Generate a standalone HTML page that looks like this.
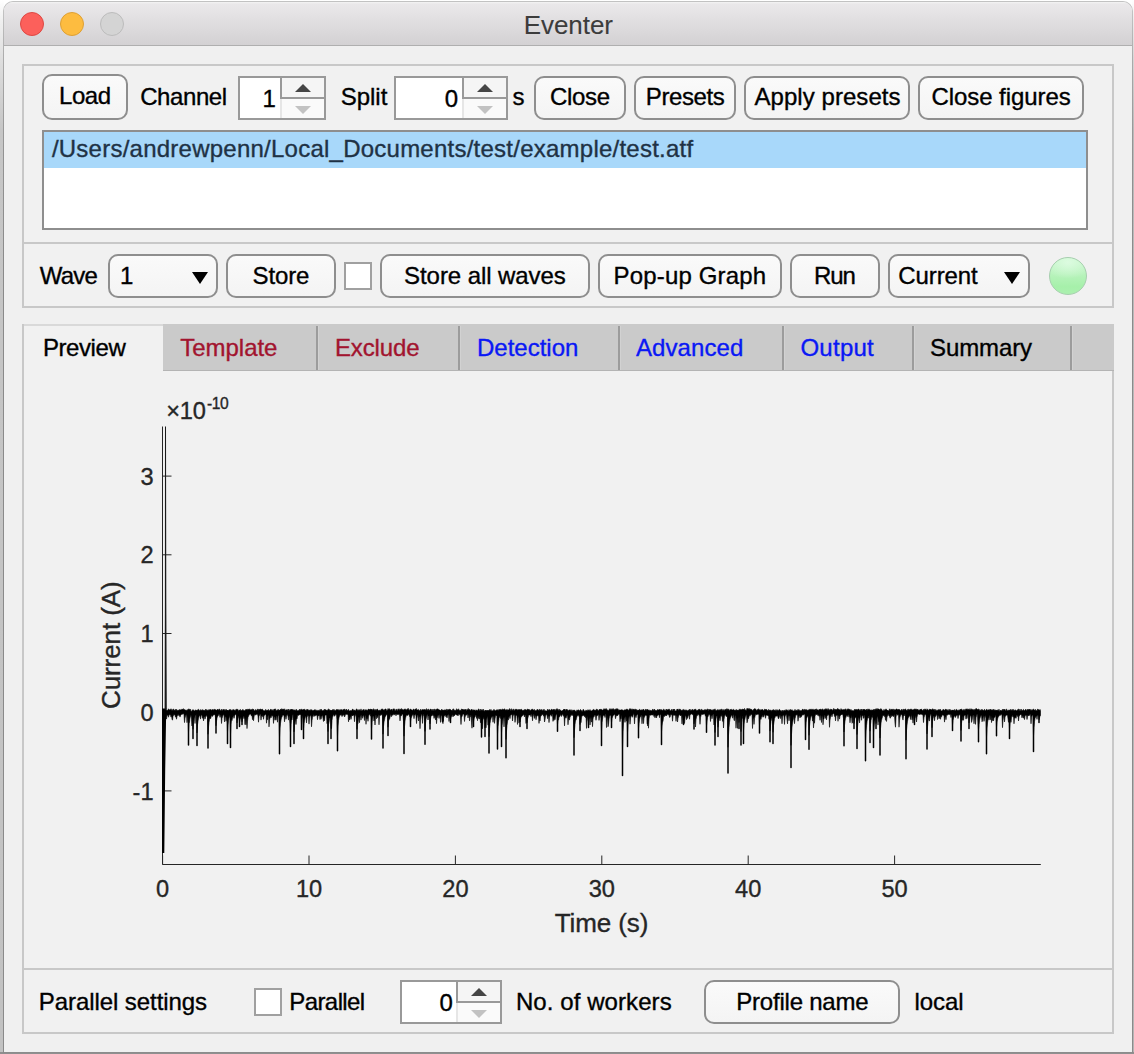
<!DOCTYPE html>
<html><head><meta charset="utf-8"><title>Eventer</title>
<style>
html,body{margin:0;padding:0;}
body{width:1134px;height:1054px;overflow:hidden;background:#fff;position:relative;font-family:"Liberation Sans",sans-serif;}
.abs{position:absolute;box-sizing:border-box;}
.t{position:absolute;white-space:pre;-webkit-text-stroke:0.35px currentColor;}
.shadowL{left:0;top:0;width:4px;height:1054px;background:linear-gradient(to bottom,#ffffff 0px,#f0f0f0 20px,#dedede 60px,#c6c6c6 130px,#c2c2c2 100%);}
.shadowR{left:1132px;top:0;width:2px;height:1054px;background:linear-gradient(to bottom,#ffffff 0px,#ededed 20px,#d6d6d6 60px,#bababa 130px,#b4b4b4 100%);}
.shadowB{left:0;top:1052px;width:1134px;height:2px;background:#8f8f8f;}
.win{left:3px;top:1px;width:1130px;height:1052px;background:#f0f0f0;border:1px solid #c2c2c2;border-bottom-color:#8c8c8c;border-radius:10px 10px 0 0;overflow:hidden;}
.titlebar{left:0;top:0;width:1128px;height:44px;background:linear-gradient(to bottom,#f4f4f4 0px,#eae8ea 2px,#d3d1d3 43px);border-bottom:1px solid #afafaf;}
.thin{-webkit-text-stroke:0.1px currentColor;}
.light{border-radius:50%;width:24px;height:24px;top:11px;}
.panel{border:2px solid #c8c8c8;background:#f1f1f1;}
.btn{border:2px solid #8e8e8e;border-radius:10px;background:linear-gradient(to bottom,#fafafa,#f4f4f4);}
.spin{border:2px solid #999;background:#fff;}
.spinr{background:#f3f3f3;border-left:2px solid #cfcfcf;}
.chk{border:2px solid #a0a0a0;background:#fff;}
.tabsep{width:2px;top:326px;height:44px;background:#9c9c9c;}
</style></head><body>

<div class="abs shadowL"></div><div class="abs shadowR"></div><div class="abs shadowB"></div>
<div class="abs win">
<div class="abs titlebar"></div>
</div>
<div class="abs" style="left:3px;top:11px;width:1px;height:1042px;background:linear-gradient(to bottom,#c2c2c2 0px,#aaaaaa 50px,#939393 140px,#8a8a8a 250px,#8a8a8a 100%);"></div>
<div class="abs" style="left:1132px;top:11px;width:1px;height:1042px;background:linear-gradient(to bottom,#c2c2c2 0px,#aaaaaa 50px,#939393 140px,#8a8a8a 250px,#8a8a8a 100%);"></div>
<div class="abs light" style="left:20px;top:12px;background:#fc605b;border:1px solid #de4843;"></div>
<div class="abs light" style="left:60px;top:12px;background:#fdbc40;border:1px solid #dea034;"></div>
<div class="abs light" style="left:99.5px;top:12px;background:#d4d4d4;border:1px solid #bcbcbc;"></div>
<span class="t thin" style="left:523.7px;top:8.6px;font-size:26px;line-height:32px;color:#3c3c3c;letter-spacing:-0.05px;">Eventer</span>
<div class="abs panel" style="left:22px;top:64px;width:1092px;height:244px;"></div>
<div class="abs" style="left:24px;top:242px;width:1088px;height:2px;background:#c8c8c8;"></div>
<div class="abs btn" style="left:42px;top:74px;width:86px;height:46px;"></div>
<span class="t " style="left:59.1px;top:80.7px;font-size:24px;line-height:30px;color:#000;letter-spacing:-0.50px;">Load</span>
<span class="t " style="left:140.2px;top:82.2px;font-size:24px;line-height:30px;color:#000;letter-spacing:-0.42px;">Channel</span>
<div class="abs spin" style="left:238px;top:76px;width:88px;height:44px;"></div>
<div class="abs" style="left:280px;top:78px;width:44px;height:21px;background:#f5f5f5;border-left:2px solid #999;border-bottom:2px solid #999;"></div>
<div class="abs" style="left:280px;top:99px;width:44px;height:19px;background:#fafafa;border-left:2px solid #e6e6e6;"></div>
<svg class="abs" style="left:295.0px;top:84px;" width="16" height="8" viewBox="0 0 16 8"><polygon points="0,8 8.0,0 16,8" fill="#454545"/></svg>
<svg class="abs" style="left:295.0px;top:106px;" width="16" height="8" viewBox="0 0 16 8"><polygon points="0,0 8.0,8 16,0" fill="#c2c2c2"/></svg>
<span class="t " style="left:262.5px;top:84.4px;font-size:24px;line-height:30px;color:#000;">1</span>
<span class="t " style="left:340.7px;top:82.2px;font-size:24px;line-height:30px;color:#000;letter-spacing:-0.02px;">Split</span>
<div class="abs spin" style="left:394px;top:76px;width:114px;height:44px;"></div>
<div class="abs" style="left:462px;top:78px;width:44px;height:21px;background:#f5f5f5;border-left:2px solid #999;border-bottom:2px solid #999;"></div>
<div class="abs" style="left:462px;top:99px;width:44px;height:19px;background:#fafafa;border-left:2px solid #e6e6e6;"></div>
<svg class="abs" style="left:477.0px;top:84px;" width="16" height="8" viewBox="0 0 16 8"><polygon points="0,8 8.0,0 16,8" fill="#454545"/></svg>
<svg class="abs" style="left:477.0px;top:106px;" width="16" height="8" viewBox="0 0 16 8"><polygon points="0,0 8.0,8 16,0" fill="#c2c2c2"/></svg>
<span class="t " style="left:444.8px;top:84.4px;font-size:24px;line-height:30px;color:#000;">0</span>
<span class="t " style="left:512.6px;top:82.2px;font-size:24px;line-height:30px;color:#000;">s</span>
<div class="abs btn" style="left:534px;top:76px;width:92px;height:44px;"></div>
<span class="t " style="left:549.9px;top:81.7px;font-size:24px;line-height:30px;color:#000;letter-spacing:-0.26px;">Close</span>
<div class="abs btn" style="left:634px;top:76px;width:102px;height:44px;"></div>
<span class="t " style="left:645.8px;top:81.7px;font-size:24px;line-height:30px;color:#000;letter-spacing:-0.41px;">Presets</span>
<div class="abs btn" style="left:744px;top:76px;width:166px;height:44px;"></div>
<span class="t " style="left:754.5px;top:81.7px;font-size:24px;line-height:30px;color:#000;letter-spacing:0.05px;">Apply presets</span>
<div class="abs btn" style="left:918px;top:76px;width:166px;height:44px;"></div>
<span class="t " style="left:931.4px;top:81.7px;font-size:24px;line-height:30px;color:#000;letter-spacing:-0.05px;">Close figures</span>
<div class="abs" style="left:42px;top:130px;width:1046px;height:100px;border:2px solid #8e8e8e;background:#fff;"></div>
<div class="abs" style="left:44px;top:132px;width:1042px;height:36px;background:#a8d8fa;"></div>
<span class="t " style="left:51.9px;top:134.4px;font-size:24px;line-height:30px;color:#1f3245;letter-spacing:0.24px;">/Users/andrewpenn/Local_Documents/test/example/test.atf</span>
<span class="t " style="left:39.7px;top:260.7px;font-size:24px;line-height:30px;color:#000;letter-spacing:-0.75px;">Wave</span>
<div class="abs btn" style="left:108px;top:254px;width:110px;height:44px;"></div>
<span class="t " style="left:120.0px;top:260.7px;font-size:24px;line-height:30px;color:#000;">1</span>
<svg class="abs" style="left:192.2px;top:272px;" width="16" height="12" viewBox="0 0 16 12"><polygon points="0,0 8.0,12 16,0" fill="#000"/></svg>
<div class="abs btn" style="left:226px;top:254px;width:110px;height:44px;"></div>
<span class="t " style="left:252.6px;top:260.7px;font-size:24px;line-height:30px;color:#000;letter-spacing:-0.14px;">Store</span>
<div class="abs chk" style="left:344px;top:262px;width:28px;height:28px;"></div>
<div class="abs btn" style="left:380px;top:254px;width:210px;height:44px;"></div>
<span class="t " style="left:404.1px;top:260.7px;font-size:24px;line-height:30px;color:#000;letter-spacing:-0.08px;">Store all waves</span>
<div class="abs btn" style="left:598px;top:254px;width:184px;height:44px;"></div>
<span class="t " style="left:613.6px;top:260.7px;font-size:24px;line-height:30px;color:#000;letter-spacing:0.15px;">Pop-up Graph</span>
<div class="abs btn" style="left:790px;top:254px;width:90px;height:44px;"></div>
<span class="t " style="left:814.1px;top:260.7px;font-size:24px;line-height:30px;color:#000;letter-spacing:-1.11px;">Run</span>
<div class="abs btn" style="left:888px;top:254px;width:142px;height:44px;"></div>
<span class="t " style="left:898.3px;top:260.7px;font-size:24px;line-height:30px;color:#000;letter-spacing:-0.10px;">Current</span>
<svg class="abs" style="left:1004.4px;top:272px;" width="16" height="12" viewBox="0 0 16 12"><polygon points="0,0 8.0,12 16,0" fill="#000"/></svg>
<div class="abs" style="left:1049px;top:257px;width:38px;height:38px;border-radius:50%;border:1px solid #a6cfae;background:radial-gradient(ellipse 70% 45% at 50% 12%,#dcfbe0 0%,rgba(220,251,224,0) 100%),linear-gradient(to bottom,#c8f6cc 0%,#b8f3bc 45%,#a6f0aa 80%,#acf0b0 100%);"></div>
<div class="abs panel" style="left:22px;top:324px;width:1092px;height:646px;border-top:none;"></div>
<div class="abs" style="left:22px;top:324px;width:1092px;height:47px;background:#cacaca;border-bottom:1px solid #b4b4b4;"></div>
<div class="abs" style="left:24px;top:324px;width:139px;height:48px;background:#f1f1f1;border-top:2px solid #d9d9d9;border-left:0;"></div>
<div class="abs" style="left:22px;top:324px;width:2px;height:48px;background:#c8c8c8;"></div>
<div class="abs tabsep" style="left:316px;"></div>
<div class="abs" style="left:318px;top:326px;width:1px;height:44px;background:#d2d2d2;"></div>
<div class="abs tabsep" style="left:458px;"></div>
<div class="abs" style="left:460px;top:326px;width:1px;height:44px;background:#d2d2d2;"></div>
<div class="abs tabsep" style="left:618px;"></div>
<div class="abs" style="left:620px;top:326px;width:1px;height:44px;background:#d2d2d2;"></div>
<div class="abs tabsep" style="left:782px;"></div>
<div class="abs" style="left:784px;top:326px;width:1px;height:44px;background:#d2d2d2;"></div>
<div class="abs tabsep" style="left:912px;"></div>
<div class="abs" style="left:914px;top:326px;width:1px;height:44px;background:#d2d2d2;"></div>
<div class="abs tabsep" style="left:1070px;"></div>
<div class="abs" style="left:1072px;top:326px;width:1px;height:44px;background:#d2d2d2;"></div>
<span class="t " style="left:43.0px;top:332.5px;font-size:24px;line-height:30px;color:#000;letter-spacing:-0.44px;">Preview</span>
<span class="t " style="left:180.3px;top:332.5px;font-size:24px;line-height:30px;color:#a2142f;letter-spacing:-0.03px;">Template</span>
<span class="t " style="left:335.0px;top:332.5px;font-size:24px;line-height:30px;color:#a2142f;letter-spacing:-0.15px;">Exclude</span>
<span class="t " style="left:477.0px;top:332.5px;font-size:24px;line-height:30px;color:#0a18f5;letter-spacing:-0.01px;">Detection</span>
<span class="t " style="left:635.9px;top:332.5px;font-size:24px;line-height:30px;color:#0a18f5;letter-spacing:0.09px;">Advanced</span>
<span class="t " style="left:800.4px;top:332.5px;font-size:24px;line-height:30px;color:#0a18f5;letter-spacing:0.27px;">Output</span>
<span class="t " style="left:930.1px;top:332.5px;font-size:24px;line-height:30px;color:#000;letter-spacing:-0.11px;">Summary</span>
<div class="abs panel" style="left:22px;top:968px;width:1092px;height:66px;"></div>
<span class="t " style="left:38.8px;top:986.9px;font-size:24px;line-height:30px;color:#000;letter-spacing:-0.07px;">Parallel settings</span>
<div class="abs chk" style="left:254px;top:988px;width:28px;height:28px;"></div>
<span class="t " style="left:289.3px;top:986.9px;font-size:24px;line-height:30px;color:#000;letter-spacing:-0.59px;">Parallel</span>
<div class="abs spin" style="left:400px;top:980px;width:102px;height:44px;"></div>
<div class="abs" style="left:456px;top:982px;width:44px;height:21px;background:#f5f5f5;border-left:2px solid #999;border-bottom:2px solid #999;"></div>
<div class="abs" style="left:456px;top:1003px;width:44px;height:19px;background:#fafafa;border-left:2px solid #e6e6e6;"></div>
<svg class="abs" style="left:471.0px;top:988px;" width="16" height="8" viewBox="0 0 16 8"><polygon points="0,8 8.0,0 16,8" fill="#454545"/></svg>
<svg class="abs" style="left:471.0px;top:1010px;" width="16" height="8" viewBox="0 0 16 8"><polygon points="0,0 8.0,8 16,0" fill="#c2c2c2"/></svg>
<span class="t " style="left:439.4px;top:987.9px;font-size:24px;line-height:30px;color:#000;">0</span>
<span class="t " style="left:515.9px;top:986.9px;font-size:24px;line-height:30px;color:#000;letter-spacing:0.08px;">No. of workers</span>
<div class="abs btn" style="left:704px;top:980px;width:196px;height:44px;"></div>
<span class="t " style="left:736.3px;top:986.9px;font-size:24px;line-height:30px;color:#000;letter-spacing:-0.22px;">Profile name</span>
<span class="t " style="left:914.6px;top:986.9px;font-size:24px;line-height:30px;color:#000;letter-spacing:-0.11px;">local</span>
<svg class="abs" style="left:0;top:380px;" width="1134" height="580" viewBox="0 380 1134 580">
<path d="M162.5 426.5V864.5H1040.8" fill="none" stroke="#262626" stroke-width="1"/>
<path d="M162.6 864.5v-9M309.0 864.5v-9M455.4 864.5v-9M601.8 864.5v-9M748.2 864.5v-9M894.6 864.5v-9M162.5 476.1h9M162.5 554.8h9M162.5 633.5h9M162.5 712.2h9M162.5 790.9h9" fill="none" stroke="#262626" stroke-width="1"/>
<path d="M165.5 709.3 166.0 709.3 166.5 710.4 167.0 710.0 167.5 710.4 168.0 710.1 168.5 708.8 169.0 709.3 169.5 709.9 170.0 709.8 170.5 709.5 171.0 708.7 171.5 709.6 172.0 710.8 172.5 710.1 173.0 709.1 173.5 709.0 174.0 710.7 174.5 710.0 175.0 709.9 175.5 709.3 176.0 710.9 176.5 709.3 177.0 710.3 177.5 710.4 178.0 710.2 178.5 710.0 179.0 710.5 179.5 709.6 180.0 709.4 180.5 709.8 181.0 710.3 181.5 709.4 182.0 708.9 182.5 709.5 183.0 709.1 183.5 708.7 184.0 709.9 184.5 709.5 185.0 710.1 185.5 710.1 186.0 710.5 186.5 710.0 187.0 710.4 187.5 709.7 188.0 709.7 188.5 708.9 189.0 709.0 189.5 709.2 190.0 710.3 190.5 709.3 191.0 711.2 191.5 711.3 192.0 710.9 192.5 709.7 193.0 710.4 193.5 709.7 194.0 710.9 194.5 710.9 195.0 710.6 195.5 710.1 196.0 709.8 196.5 710.3 197.0 711.2 197.5 709.9 198.0 709.6 198.5 709.2 199.0 709.9 199.5 710.7 200.0 710.4 200.5 709.6 201.0 710.5 201.5 710.6 202.0 709.6 202.5 709.8 203.0 710.8 203.5 710.0 204.0 710.2 204.5 710.3 205.0 711.0 205.5 709.6 206.0 709.1 206.5 711.0 207.0 709.7 207.5 710.9 208.0 710.5 208.5 710.4 209.0 709.4 209.5 710.3 210.0 709.4 210.5 709.6 211.0 709.9 211.5 710.5 212.0 709.5 212.5 710.1 213.0 709.3 213.5 710.2 214.0 709.9 214.5 709.3 215.0 709.2 215.5 710.1 216.0 709.8 216.5 710.4 217.0 710.0 217.5 709.1 218.0 710.1 218.5 710.3 219.0 708.9 219.5 709.1 220.0 710.6 220.5 710.4 221.0 710.6 221.5 709.2 222.0 711.1 222.5 710.3 223.0 709.2 223.5 709.5 224.0 710.3 224.5 710.2 225.0 709.2 225.5 710.9 226.0 709.7 226.5 709.6 227.0 710.8 227.5 710.2 228.0 711.0 228.5 710.2 229.0 710.1 229.5 709.6 230.0 709.8 230.5 709.5 231.0 710.7 231.5 710.7 232.0 709.7 232.5 711.0 233.0 709.4 233.5 709.8 234.0 710.0 234.5 709.9 235.0 710.8 235.5 710.3 236.0 709.2 236.5 709.2 237.0 710.3 237.5 709.3 238.0 709.5 238.5 711.1 239.0 711.3 239.5 709.8 240.0 710.7 240.5 709.4 241.0 710.7 241.5 710.8 242.0 710.9 242.5 709.7 243.0 709.4 243.5 710.3 244.0 710.6 244.5 710.7 245.0 710.6 245.5 709.5 246.0 710.2 246.5 709.6 247.0 709.0 247.5 710.6 248.0 708.9 248.5 709.5 249.0 709.9 249.5 708.8 250.0 710.1 250.5 709.6 251.0 710.3 251.5 709.5 252.0 709.9 252.5 708.8 253.0 710.8 253.5 709.1 254.0 710.3 254.5 711.0 255.0 710.4 255.5 709.5 256.0 710.5 256.5 710.3 257.0 710.3 257.5 708.9 258.0 710.7 258.5 709.4 259.0 709.3 259.5 709.8 260.0 708.9 260.5 709.0 261.0 710.1 261.5 709.6 262.0 709.0 262.5 709.2 263.0 710.3 263.5 710.5 264.0 710.9 264.5 710.8 265.0 710.4 265.5 709.4 266.0 710.5 266.5 710.2 267.0 710.2 267.5 710.0 268.0 711.0 268.5 709.4 269.0 710.8 269.5 710.9 270.0 710.0 270.5 709.4 271.0 709.2 271.5 711.0 272.0 709.4 272.5 710.5 273.0 710.4 273.5 709.9 274.0 709.1 274.5 709.3 275.0 708.9 275.5 708.9 276.0 710.7 276.5 710.8 277.0 709.9 277.5 709.7 278.0 710.7 278.5 709.5 279.0 709.8 279.5 710.4 280.0 710.6 280.5 709.1 281.0 709.9 281.5 708.7 282.0 709.6 282.5 709.6 283.0 708.8 283.5 709.5 284.0 709.3 284.5 708.8 285.0 710.8 285.5 709.9 286.0 709.8 286.5 709.8 287.0 710.1 287.5 709.6 288.0 710.9 288.5 709.0 289.0 710.9 289.5 710.6 290.0 709.4 290.5 710.0 291.0 709.2 291.5 709.5 292.0 709.0 292.5 709.8 293.0 709.4 293.5 709.8 294.0 711.0 294.5 710.1 295.0 709.6 295.5 710.6 296.0 710.8 296.5 709.3 297.0 710.6 297.5 710.8 298.0 710.6 298.5 710.2 299.0 710.7 299.5 709.6 300.0 709.0 300.5 710.3 301.0 710.1 301.5 708.9 302.0 709.7 302.5 709.9 303.0 710.0 303.5 709.2 304.0 710.3 304.5 709.2 305.0 709.5 305.5 710.1 306.0 711.1 306.5 709.7 307.0 709.2 307.5 709.7 308.0 709.3 308.5 711.1 309.0 709.9 309.5 710.4 310.0 709.8 310.5 710.4 311.0 709.4 311.5 710.1 312.0 710.3 312.5 710.2 313.0 710.7 313.5 710.6 314.0 709.8 314.5 710.2 315.0 709.5 315.5 711.0 316.0 709.8 316.5 710.4 317.0 710.7 317.5 710.8 318.0 709.9 318.5 710.5 319.0 710.9 319.5 710.3 320.0 709.5 320.5 711.0 321.0 709.0 321.5 709.7 322.0 710.6 322.5 710.8 323.0 710.4 323.5 710.1 324.0 710.7 324.5 709.1 325.0 709.6 325.5 709.7 326.0 709.9 326.5 710.3 327.0 710.3 327.5 711.1 328.0 709.2 328.5 708.9 329.0 710.3 329.5 709.6 330.0 710.8 330.5 710.3 331.0 710.2 331.5 711.0 332.0 710.0 332.5 710.2 333.0 709.3 333.5 711.0 334.0 709.4 334.5 710.3 335.0 710.4 335.5 710.4 336.0 710.6 336.5 709.3 337.0 709.8 337.5 710.1 338.0 709.2 338.5 711.0 339.0 709.8 339.5 711.1 340.0 709.5 340.5 710.5 341.0 709.6 341.5 710.1 342.0 709.4 342.5 711.0 343.0 710.0 343.5 709.6 344.0 709.1 344.5 709.1 345.0 710.4 345.5 709.7 346.0 710.6 346.5 709.0 347.0 710.8 347.5 710.6 348.0 709.9 348.5 709.3 349.0 710.8 349.5 711.0 350.0 710.8 350.5 710.5 351.0 710.7 351.5 710.7 352.0 710.0 352.5 709.2 353.0 709.1 353.5 710.7 354.0 709.9 354.5 710.1 355.0 710.8 355.5 711.0 356.0 709.8 356.5 708.9 357.0 709.0 357.5 710.6 358.0 711.0 358.5 709.8 359.0 709.7 359.5 709.7 360.0 710.5 360.5 710.5 361.0 708.9 361.5 710.7 362.0 710.5 362.5 710.5 363.0 709.5 363.5 709.9 364.0 709.3 364.5 711.1 365.0 710.6 365.5 709.7 366.0 710.1 366.5 709.8 367.0 710.4 367.5 710.5 368.0 709.6 368.5 709.1 369.0 709.0 369.5 710.1 370.0 709.2 370.5 709.3 371.0 709.2 371.5 709.5 372.0 709.1 372.5 710.8 373.0 709.5 373.5 708.7 374.0 710.2 374.5 710.3 375.0 709.3 375.5 710.8 376.0 709.6 376.5 710.7 377.0 709.0 377.5 709.3 378.0 709.7 378.5 710.8 379.0 710.7 379.5 710.0 380.0 710.2 380.5 710.2 381.0 710.5 381.5 709.1 382.0 709.1 382.5 708.9 383.0 709.8 383.5 710.6 384.0 709.6 384.5 710.4 385.0 709.1 385.5 709.0 386.0 709.0 386.5 710.4 387.0 710.5 387.5 710.6 388.0 708.6 388.5 710.0 389.0 708.6 389.5 708.9 390.0 709.4 390.5 710.3 391.0 710.1 391.5 709.0 392.0 710.2 392.5 710.7 393.0 708.8 393.5 709.1 394.0 709.2 394.5 708.9 395.0 710.7 395.5 710.9 396.0 709.2 396.5 709.3 397.0 710.5 397.5 710.7 398.0 708.9 398.5 710.0 399.0 708.7 399.5 709.8 400.0 710.6 400.5 708.9 401.0 710.0 401.5 708.7 402.0 708.8 402.5 709.4 403.0 710.2 403.5 710.1 404.0 709.2 404.5 709.5 405.0 708.7 405.5 709.9 406.0 709.2 406.5 710.2 407.0 709.8 407.5 708.8 408.0 708.7 408.5 708.6 409.0 710.6 409.5 710.6 410.0 709.2 410.5 709.0 411.0 709.6 411.5 709.9 412.0 710.0 412.5 710.8 413.0 709.4 413.5 709.1 414.0 709.6 414.5 710.7 415.0 709.1 415.5 709.1 416.0 709.4 416.5 708.5 417.0 709.9 417.5 710.1 418.0 709.8 418.5 709.4 419.0 710.6 419.5 710.7 420.0 710.5 420.5 709.2 421.0 710.7 421.5 710.2 422.0 709.4 422.5 709.7 423.0 709.6 423.5 709.8 424.0 709.5 424.5 709.6 425.0 709.4 425.5 709.7 426.0 710.4 426.5 708.6 427.0 710.8 427.5 709.7 428.0 709.3 428.5 709.1 429.0 710.8 429.5 710.8 430.0 709.3 430.5 709.3 431.0 709.0 431.5 709.7 432.0 710.7 432.5 710.1 433.0 709.0 433.5 710.4 434.0 710.2 434.5 708.9 435.0 710.9 435.5 709.6 436.0 710.1 436.5 709.2 437.0 708.8 437.5 709.1 438.0 708.8 438.5 709.3 439.0 710.0 439.5 710.1 440.0 709.9 440.5 710.5 441.0 710.7 441.5 709.5 442.0 709.2 442.5 710.7 443.0 710.4 443.5 710.3 444.0 710.0 444.5 710.2 445.0 709.6 445.5 710.2 446.0 709.7 446.5 709.3 447.0 711.0 447.5 709.4 448.0 710.2 448.5 709.8 449.0 709.1 449.5 709.2 450.0 709.8 450.5 709.5 451.0 710.1 451.5 710.5 452.0 710.6 452.5 710.0 453.0 708.8 453.5 709.0 454.0 710.6 454.5 710.2 455.0 710.1 455.5 710.6 456.0 710.4 456.5 708.7 457.0 710.2 457.5 709.7 458.0 709.5 458.5 708.8 459.0 709.9 459.5 710.2 460.0 710.7 460.5 709.9 461.0 710.9 461.5 709.1 462.0 708.9 462.5 709.7 463.0 709.0 463.5 710.0 464.0 710.1 464.5 709.8 465.0 709.3 465.5 710.2 466.0 709.1 466.5 710.7 467.0 710.2 467.5 709.8 468.0 708.6 468.5 708.8 469.0 710.2 469.5 709.5 470.0 709.6 470.5 710.7 471.0 710.3 471.5 709.1 472.0 710.3 472.5 710.6 473.0 709.4 473.5 710.7 474.0 710.0 474.5 710.3 475.0 709.7 475.5 710.9 476.0 710.4 476.5 710.1 477.0 710.2 477.5 711.0 478.0 709.9 478.5 708.9 479.0 709.0 479.5 710.9 480.0 710.6 480.5 709.2 481.0 711.2 481.5 711.0 482.0 709.2 482.5 711.1 483.0 710.0 483.5 709.3 484.0 711.4 484.5 711.4 485.0 711.4 485.5 710.0 486.0 710.8 486.5 710.2 487.0 711.3 487.5 710.0 488.0 711.2 488.5 710.5 489.0 710.9 489.5 709.7 490.0 709.5 490.5 711.2 491.0 709.4 491.5 711.3 492.0 710.5 492.5 710.9 493.0 710.6 493.5 710.3 494.0 709.3 494.5 710.5 495.0 710.3 495.5 711.0 496.0 710.2 496.5 709.9 497.0 710.3 497.5 710.8 498.0 709.3 498.5 710.9 499.0 709.9 499.5 709.3 500.0 710.3 500.5 709.4 501.0 709.3 501.5 709.9 502.0 709.9 502.5 708.8 503.0 709.7 503.5 709.6 504.0 709.3 504.5 708.9 505.0 709.3 505.5 710.8 506.0 709.5 506.5 709.7 507.0 710.6 507.5 709.8 508.0 709.6 508.5 710.1 509.0 710.0 509.5 708.7 510.0 708.8 510.5 709.9 511.0 710.7 511.5 708.7 512.0 710.7 512.5 709.8 513.0 710.2 513.5 708.9 514.0 710.8 514.5 710.6 515.0 709.4 515.5 710.0 516.0 708.9 516.5 709.8 517.0 709.3 517.5 709.9 518.0 710.3 518.5 709.6 519.0 709.2 519.5 709.5 520.0 710.2 520.5 709.6 521.0 709.2 521.5 709.4 522.0 709.7 522.5 710.4 523.0 710.5 523.5 710.1 524.0 710.6 524.5 709.6 525.0 709.6 525.5 709.6 526.0 709.9 526.5 710.6 527.0 709.3 527.5 709.0 528.0 709.8 528.5 709.7 529.0 709.0 529.5 710.6 530.0 709.8 530.5 711.0 531.0 710.2 531.5 709.4 532.0 709.2 532.5 709.1 533.0 709.8 533.5 710.1 534.0 710.2 534.5 709.4 535.0 711.1 535.5 710.6 536.0 710.8 536.5 710.6 537.0 709.4 537.5 709.5 538.0 709.6 538.5 710.0 539.0 710.9 539.5 709.4 540.0 709.3 540.5 710.3 541.0 710.1 541.5 709.4 542.0 710.6 542.5 711.0 543.0 709.6 543.5 710.7 544.0 709.2 544.5 710.2 545.0 710.8 545.5 710.7 546.0 711.0 546.5 711.1 547.0 711.0 547.5 709.2 548.0 710.2 548.5 709.7 549.0 710.6 549.5 709.4 550.0 710.1 550.5 711.0 551.0 709.6 551.5 709.4 552.0 709.2 552.5 710.1 553.0 710.3 553.5 709.6 554.0 709.0 554.5 710.6 555.0 709.4 555.5 710.7 556.0 709.8 556.5 708.7 557.0 710.7 557.5 708.7 558.0 710.2 558.5 710.4 559.0 709.1 559.5 709.6 560.0 711.1 560.5 709.8 561.0 711.0 561.5 711.1 562.0 710.7 562.5 710.5 563.0 710.0 563.5 709.6 564.0 709.1 564.5 709.6 565.0 709.0 565.5 710.9 566.0 709.9 566.5 709.1 567.0 709.8 567.5 709.7 568.0 710.4 568.5 711.0 569.0 709.7 569.5 710.1 570.0 709.9 570.5 711.2 571.0 709.5 571.5 711.5 572.0 710.3 572.5 711.5 573.0 709.8 573.5 710.8 574.0 710.8 574.5 710.0 575.0 710.4 575.5 711.0 576.0 711.5 576.5 711.3 577.0 709.8 577.5 710.9 578.0 710.0 578.5 709.8 579.0 710.6 579.5 711.5 580.0 710.4 580.5 709.4 581.0 710.6 581.5 710.6 582.0 711.4 582.5 710.9 583.0 709.5 583.5 709.5 584.0 710.2 584.5 711.6 585.0 710.9 585.5 711.2 586.0 709.9 586.5 710.5 587.0 711.3 587.5 710.4 588.0 709.6 588.5 710.9 589.0 710.8 589.5 710.5 590.0 709.5 590.5 710.8 591.0 710.8 591.5 710.9 592.0 710.9 592.5 710.0 593.0 710.1 593.5 709.4 594.0 709.5 594.5 710.1 595.0 710.6 595.5 709.9 596.0 710.6 596.5 708.9 597.0 710.3 597.5 709.5 598.0 710.5 598.5 710.7 599.0 709.9 599.5 709.1 600.0 709.6 600.5 709.4 601.0 709.1 601.5 709.4 602.0 709.9 602.5 710.2 603.0 709.8 603.5 710.0 604.0 708.6 604.5 710.1 605.0 708.8 605.5 708.9 606.0 709.9 606.5 708.6 607.0 710.0 607.5 710.2 608.0 709.9 608.5 710.7 609.0 710.3 609.5 708.7 610.0 709.7 610.5 709.4 611.0 708.6 611.5 710.1 612.0 709.2 612.5 708.7 613.0 710.3 613.5 708.7 614.0 708.9 614.5 710.1 615.0 710.3 615.5 709.1 616.0 708.7 616.5 708.7 617.0 709.5 617.5 708.8 618.0 708.8 618.5 710.3 619.0 710.3 619.5 709.9 620.0 710.1 620.5 710.1 621.0 710.0 621.5 709.8 622.0 709.5 622.5 709.9 623.0 710.6 623.5 710.9 624.0 709.8 624.5 709.9 625.0 710.2 625.5 709.7 626.0 710.1 626.5 709.1 627.0 709.2 627.5 709.2 628.0 709.7 628.5 710.6 629.0 710.0 629.5 708.8 630.0 708.8 630.5 708.8 631.0 709.5 631.5 710.2 632.0 708.7 632.5 710.6 633.0 709.1 633.5 709.7 634.0 708.9 634.5 709.7 635.0 710.1 635.5 709.1 636.0 709.5 636.5 709.6 637.0 710.5 637.5 710.2 638.0 710.0 638.5 710.9 639.0 709.6 639.5 709.3 640.0 710.6 640.5 710.1 641.0 709.8 641.5 709.8 642.0 710.5 642.5 709.8 643.0 710.1 643.5 709.0 644.0 709.9 644.5 710.9 645.0 710.5 645.5 709.4 646.0 709.3 646.5 710.7 647.0 709.1 647.5 709.7 648.0 709.7 648.5 710.6 649.0 709.7 649.5 711.1 650.0 710.3 650.5 710.4 651.0 710.5 651.5 710.8 652.0 710.5 652.5 709.4 653.0 709.3 653.5 710.2 654.0 710.2 654.5 709.0 655.0 710.8 655.5 710.5 656.0 710.2 656.5 710.8 657.0 710.6 657.5 709.4 658.0 710.0 658.5 710.0 659.0 709.4 659.5 709.7 660.0 709.3 660.5 711.0 661.0 709.2 661.5 710.1 662.0 710.6 662.5 710.8 663.0 709.6 663.5 709.2 664.0 710.5 664.5 710.3 665.0 709.5 665.5 710.7 666.0 710.9 666.5 709.0 667.0 710.0 667.5 709.9 668.0 709.3 668.5 709.4 669.0 709.5 669.5 709.2 670.0 710.7 670.5 710.8 671.0 710.5 671.5 709.8 672.0 709.1 672.5 711.1 673.0 710.6 673.5 709.0 674.0 709.7 674.5 709.0 675.0 710.9 675.5 710.9 676.0 711.0 676.5 710.6 677.0 709.0 677.5 709.6 678.0 708.9 678.5 711.1 679.0 709.3 679.5 709.1 680.0 710.5 680.5 709.4 681.0 709.7 681.5 711.0 682.0 710.2 682.5 709.7 683.0 710.9 683.5 709.4 684.0 709.8 684.5 711.0 685.0 709.6 685.5 711.0 686.0 710.1 686.5 709.9 687.0 710.9 687.5 710.8 688.0 710.4 688.5 709.8 689.0 710.4 689.5 709.5 690.0 709.1 690.5 709.9 691.0 710.9 691.5 709.9 692.0 710.1 692.5 709.2 693.0 710.5 693.5 710.4 694.0 709.5 694.5 709.6 695.0 710.1 695.5 708.9 696.0 709.7 696.5 710.8 697.0 710.7 697.5 709.9 698.0 710.6 698.5 709.6 699.0 709.0 699.5 709.3 700.0 710.3 700.5 709.7 701.0 711.0 701.5 709.3 702.0 709.6 702.5 710.8 703.0 709.8 703.5 710.6 704.0 710.3 704.5 710.0 705.0 709.4 705.5 710.6 706.0 709.5 706.5 710.3 707.0 710.0 707.5 708.8 708.0 710.4 708.5 710.2 709.0 709.0 709.5 710.0 710.0 710.0 710.5 709.6 711.0 709.5 711.5 710.3 712.0 709.9 712.5 710.5 713.0 709.5 713.5 710.2 714.0 709.4 714.5 710.2 715.0 708.8 715.5 710.5 716.0 710.7 716.5 710.4 717.0 710.0 717.5 709.6 718.0 710.7 718.5 710.5 719.0 709.4 719.5 710.2 720.0 710.0 720.5 709.6 721.0 710.6 721.5 708.9 722.0 710.4 722.5 710.6 723.0 709.3 723.5 710.0 724.0 710.6 724.5 710.5 725.0 709.3 725.5 710.0 726.0 709.2 726.5 708.7 727.0 710.7 727.5 708.9 728.0 708.9 728.5 709.1 729.0 710.4 729.5 710.4 730.0 709.4 730.5 709.5 731.0 710.3 731.5 709.3 732.0 709.7 732.5 710.0 733.0 709.8 733.5 709.4 734.0 709.6 734.5 710.5 735.0 710.0 735.5 710.4 736.0 709.5 736.5 709.7 737.0 710.6 737.5 710.1 738.0 709.9 738.5 710.2 739.0 710.6 739.5 708.9 740.0 709.7 740.5 709.4 741.0 709.4 741.5 709.8 742.0 709.2 742.5 709.0 743.0 709.9 743.5 709.1 744.0 709.9 744.5 708.4 745.0 710.5 745.5 709.8 746.0 710.2 746.5 710.2 747.0 708.3 747.5 708.9 748.0 708.4 748.5 709.2 749.0 708.4 749.5 708.8 750.0 710.0 750.5 708.8 751.0 709.8 751.5 709.3 752.0 709.8 752.5 710.4 753.0 710.6 753.5 709.4 754.0 708.9 754.5 708.8 755.0 708.7 755.5 708.9 756.0 709.6 756.5 710.6 757.0 710.5 757.5 709.4 758.0 710.1 758.5 708.8 759.0 709.2 759.5 710.4 760.0 709.5 760.5 710.7 761.0 709.5 761.5 709.9 762.0 710.0 762.5 709.3 763.0 710.2 763.5 710.6 764.0 710.5 764.5 709.2 765.0 709.3 765.5 709.5 766.0 710.1 766.5 709.3 767.0 709.9 767.5 710.5 768.0 710.9 768.5 709.4 769.0 710.5 769.5 710.8 770.0 709.7 770.5 710.8 771.0 710.6 771.5 710.4 772.0 711.6 772.5 709.8 773.0 710.9 773.5 709.5 774.0 710.2 774.5 710.0 775.0 710.8 775.5 710.4 776.0 709.5 776.5 710.0 777.0 711.4 777.5 709.7 778.0 711.1 778.5 710.4 779.0 709.6 779.5 709.4 780.0 709.9 780.5 710.4 781.0 711.2 781.5 711.5 782.0 710.0 782.5 710.5 783.0 711.5 783.5 710.7 784.0 710.0 784.5 710.2 785.0 710.7 785.5 710.8 786.0 709.5 786.5 710.0 787.0 710.3 787.5 710.2 788.0 710.6 788.5 711.2 789.0 709.6 789.5 710.1 790.0 710.9 790.5 709.5 791.0 709.8 791.5 711.1 792.0 709.6 792.5 710.7 793.0 710.8 793.5 711.0 794.0 710.6 794.5 711.0 795.0 709.3 795.5 710.9 796.0 710.5 796.5 709.9 797.0 710.6 797.5 710.7 798.0 709.3 798.5 710.8 799.0 709.6 799.5 710.2 800.0 711.0 800.5 710.5 801.0 711.1 801.5 710.6 802.0 709.9 802.5 709.3 803.0 709.2 803.5 710.5 804.0 709.4 804.5 709.4 805.0 710.4 805.5 709.5 806.0 710.2 806.5 709.5 807.0 710.2 807.5 710.0 808.0 710.7 808.5 709.8 809.0 709.7 809.5 709.4 810.0 709.3 810.5 709.4 811.0 709.2 811.5 709.2 812.0 709.9 812.5 709.7 813.0 708.9 813.5 710.0 814.0 710.0 814.5 710.1 815.0 709.1 815.5 709.3 816.0 710.8 816.5 708.9 817.0 709.2 817.5 710.1 818.0 710.1 818.5 710.4 819.0 709.3 819.5 709.7 820.0 709.0 820.5 709.1 821.0 710.3 821.5 709.5 822.0 710.2 822.5 708.8 823.0 709.6 823.5 710.6 824.0 709.5 824.5 710.1 825.0 708.7 825.5 708.9 826.0 710.0 826.5 708.7 827.0 709.2 827.5 710.5 828.0 708.5 828.5 709.0 829.0 710.4 829.5 709.7 830.0 709.5 830.5 709.2 831.0 709.8 831.5 709.1 832.0 710.0 832.5 709.9 833.0 710.4 833.5 708.7 834.0 708.5 834.5 710.4 835.0 709.0 835.5 709.8 836.0 709.7 836.5 709.6 837.0 709.5 837.5 708.5 838.0 708.7 838.5 709.0 839.0 709.5 839.5 709.9 840.0 709.6 840.5 710.7 841.0 708.6 841.5 709.8 842.0 709.8 842.5 709.9 843.0 709.3 843.5 709.7 844.0 709.7 844.5 709.4 845.0 710.2 845.5 708.9 846.0 708.9 846.5 710.5 847.0 710.2 847.5 708.8 848.0 709.5 848.5 709.0 849.0 708.8 849.5 709.7 850.0 709.4 850.5 710.5 851.0 709.4 851.5 710.3 852.0 710.8 852.5 710.5 853.0 710.9 853.5 711.1 854.0 711.2 854.5 709.2 855.0 710.1 855.5 710.0 856.0 709.1 856.5 710.3 857.0 709.4 857.5 710.6 858.0 709.1 858.5 709.0 859.0 709.6 859.5 710.7 860.0 709.4 860.5 709.7 861.0 710.9 861.5 709.0 862.0 711.1 862.5 710.2 863.0 709.0 863.5 709.8 864.0 709.2 864.5 709.6 865.0 709.4 865.5 710.1 866.0 710.8 866.5 709.1 867.0 710.7 867.5 709.4 868.0 708.8 868.5 709.5 869.0 709.4 869.5 709.2 870.0 709.9 870.5 710.5 871.0 709.7 871.5 710.5 872.0 709.8 872.5 710.3 873.0 709.7 873.5 709.5 874.0 710.7 874.5 709.3 875.0 710.4 875.5 708.9 876.0 709.1 876.5 708.7 877.0 710.2 877.5 708.7 878.0 708.8 878.5 709.1 879.0 709.0 879.5 709.8 880.0 710.1 880.5 708.8 881.0 708.8 881.5 709.0 882.0 710.3 882.5 710.7 883.0 710.7 883.5 710.9 884.0 709.3 884.5 710.7 885.0 709.9 885.5 709.8 886.0 708.8 886.5 709.7 887.0 709.8 887.5 710.5 888.0 710.1 888.5 710.9 889.0 710.9 889.5 708.8 890.0 709.7 890.5 710.2 891.0 708.9 891.5 709.5 892.0 709.7 892.5 709.7 893.0 708.9 893.5 710.7 894.0 709.1 894.5 710.3 895.0 710.0 895.5 710.1 896.0 709.1 896.5 709.1 897.0 708.9 897.5 709.9 898.0 709.3 898.5 709.6 899.0 709.3 899.5 709.6 900.0 710.0 900.5 710.7 901.0 710.2 901.5 709.2 902.0 710.4 902.5 710.3 903.0 709.2 903.5 709.3 904.0 710.6 904.5 709.5 905.0 709.1 905.5 708.9 906.0 709.7 906.5 710.4 907.0 710.9 907.5 709.4 908.0 710.5 908.5 709.2 909.0 709.5 909.5 710.0 910.0 709.2 910.5 710.1 911.0 708.8 911.5 709.8 912.0 709.6 912.5 709.9 913.0 709.8 913.5 709.7 914.0 709.4 914.5 708.9 915.0 709.1 915.5 709.4 916.0 708.8 916.5 709.3 917.0 710.3 917.5 709.0 918.0 710.3 918.5 709.7 919.0 710.4 919.5 710.1 920.0 709.7 920.5 709.0 921.0 709.6 921.5 708.9 922.0 710.1 922.5 710.6 923.0 710.4 923.5 709.8 924.0 709.0 924.5 710.6 925.0 708.8 925.5 709.3 926.0 710.1 926.5 710.5 927.0 708.8 927.5 709.3 928.0 709.9 928.5 710.5 929.0 709.5 929.5 709.2 930.0 710.0 930.5 709.0 931.0 709.5 931.5 710.0 932.0 709.6 932.5 708.9 933.0 708.8 933.5 709.7 934.0 710.0 934.5 709.3 935.0 710.9 935.5 709.7 936.0 709.5 936.5 710.7 937.0 710.5 937.5 710.6 938.0 709.7 938.5 710.3 939.0 709.2 939.5 710.1 940.0 710.3 940.5 709.3 941.0 710.8 941.5 711.1 942.0 710.6 942.5 710.7 943.0 709.3 943.5 709.7 944.0 709.7 944.5 710.4 945.0 709.6 945.5 709.4 946.0 709.1 946.5 710.2 947.0 709.5 947.5 710.2 948.0 710.4 948.5 711.0 949.0 709.2 949.5 710.7 950.0 709.4 950.5 709.9 951.0 710.8 951.5 709.9 952.0 710.4 952.5 710.6 953.0 709.8 953.5 710.6 954.0 710.1 954.5 709.5 955.0 711.1 955.5 710.8 956.0 709.4 956.5 709.4 957.0 710.2 957.5 710.2 958.0 711.2 958.5 709.8 959.0 710.4 959.5 710.1 960.0 709.8 960.5 709.0 961.0 709.7 961.5 709.0 962.0 709.4 962.5 710.3 963.0 710.7 963.5 709.7 964.0 709.6 964.5 710.9 965.0 709.2 965.5 710.7 966.0 708.8 966.5 709.6 967.0 708.8 967.5 710.3 968.0 708.8 968.5 709.7 969.0 709.4 969.5 710.1 970.0 708.6 970.5 709.8 971.0 710.3 971.5 709.0 972.0 708.8 972.5 709.6 973.0 710.2 973.5 709.5 974.0 710.5 974.5 709.5 975.0 709.5 975.5 709.2 976.0 708.4 976.5 708.7 977.0 709.1 977.5 709.6 978.0 709.5 978.5 709.2 979.0 709.0 979.5 710.4 980.0 710.7 980.5 709.8 981.0 710.5 981.5 709.4 982.0 710.4 982.5 709.6 983.0 710.1 983.5 710.6 984.0 710.6 984.5 709.2 985.0 710.6 985.5 710.9 986.0 710.1 986.5 709.4 987.0 709.3 987.5 710.5 988.0 709.9 988.5 709.9 989.0 709.4 989.5 709.7 990.0 710.6 990.5 709.1 991.0 709.7 991.5 710.3 992.0 709.6 992.5 710.1 993.0 710.2 993.5 709.2 994.0 710.5 994.5 709.7 995.0 710.8 995.5 709.8 996.0 711.0 996.5 710.7 997.0 709.9 997.5 709.9 998.0 710.7 998.5 710.3 999.0 709.2 999.5 711.2 1000.0 711.2 1000.5 710.0 1001.0 711.1 1001.5 710.7 1002.0 709.9 1002.5 709.3 1003.0 711.0 1003.5 709.2 1004.0 710.1 1004.5 709.5 1005.0 709.2 1005.5 711.0 1006.0 710.8 1006.5 708.9 1007.0 710.8 1007.5 710.4 1008.0 710.4 1008.5 710.6 1009.0 709.7 1009.5 710.7 1010.0 710.4 1010.5 709.3 1011.0 710.4 1011.5 710.3 1012.0 709.5 1012.5 710.4 1013.0 709.2 1013.5 709.7 1014.0 710.7 1014.5 710.3 1015.0 710.3 1015.5 709.9 1016.0 710.2 1016.5 710.9 1017.0 710.3 1017.5 710.2 1018.0 709.2 1018.5 709.0 1019.0 710.7 1019.5 710.2 1020.0 709.1 1020.5 710.4 1021.0 711.1 1021.5 709.3 1022.0 711.2 1022.5 710.5 1023.0 709.7 1023.5 709.4 1024.0 710.6 1024.5 710.7 1025.0 710.2 1025.5 709.5 1026.0 709.3 1026.5 710.7 1027.0 710.5 1027.5 709.3 1028.0 710.0 1028.5 709.2 1029.0 709.7 1029.5 709.5 1030.0 709.0 1030.5 711.1 1031.0 709.5 1031.5 710.2 1032.0 710.6 1032.5 709.7 1033.0 710.0 1033.5 709.0 1034.0 709.4 1034.5 710.6 1035.0 709.8 1035.5 709.5 1036.0 710.9 1036.5 710.4 1037.0 710.9 1037.5 709.2 1038.0 709.1 1038.5 709.9 1039.0 709.8 1039.5 710.4 1040.0 709.4 1040.5 710.7 L1040.5 715.6 1040.0 715.9 1039.5 717.9 1039.0 719.7 1038.5 715.2 1038.0 715.5 1037.5 715.2 1037.0 719.4 1036.5 715.7 1036.0 716.2 1035.5 717.4 1035.0 718.4 1034.5 721.6 1034.0 727.4 1033.5 735.9 1033.0 715.8 1032.5 715.0 1032.0 715.4 1031.5 717.5 1031.0 723.8 1030.5 714.8 1030.0 714.4 1029.5 715.3 1029.0 715.9 1028.5 715.7 1028.0 715.0 1027.5 716.5 1027.0 719.5 1026.5 715.3 1026.0 715.4 1025.5 715.1 1025.0 716.6 1024.5 719.6 1024.0 715.2 1023.5 718.2 1023.0 715.7 1022.5 715.9 1022.0 717.9 1021.5 715.3 1021.0 714.5 1020.5 714.5 1020.0 715.3 1019.5 715.4 1019.0 716.7 1018.5 721.0 1018.0 714.7 1017.5 716.5 1017.0 714.8 1016.5 715.8 1016.0 718.4 1015.5 716.8 1015.0 718.1 1014.5 717.8 1014.0 723.8 1013.5 715.7 1013.0 717.1 1012.5 715.3 1012.0 716.1 1011.5 717.7 1011.0 722.3 1010.5 719.8 1010.0 723.8 1009.5 729.0 1009.0 718.5 1008.5 722.3 1008.0 718.7 1007.5 714.9 1007.0 715.2 1006.5 714.9 1006.0 715.7 1005.5 715.5 1005.0 717.4 1004.5 721.9 1004.0 715.5 1003.5 716.1 1003.0 720.3 1002.5 727.7 1002.0 715.8 1001.5 714.1 1001.0 714.6 1000.5 715.4 1000.0 714.6 999.5 715.4 999.0 716.1 998.5 716.7 998.0 717.6 997.5 719.0 997.0 722.0 996.5 727.1 996.0 715.2 995.5 715.4 995.0 717.3 994.5 716.9 994.0 718.3 993.5 720.9 993.0 717.0 992.5 720.6 992.0 719.1 991.5 722.6 991.0 715.5 990.5 719.7 990.0 715.3 989.5 716.5 989.0 720.1 988.5 716.8 988.0 719.6 987.5 722.9 987.0 727.9 986.5 737.1 986.0 718.2 985.5 715.7 985.0 715.8 984.5 718.2 984.0 721.4 983.5 715.1 983.0 717.4 982.5 720.6 982.0 721.8 981.5 715.4 981.0 715.6 980.5 716.7 980.0 718.1 979.5 720.2 979.0 724.7 978.5 729.9 978.0 723.0 977.5 714.1 977.0 714.2 976.5 715.7 976.0 717.7 975.5 724.4 975.0 715.2 974.5 718.0 974.0 723.8 973.5 715.3 973.0 715.3 972.5 717.4 972.0 720.7 971.5 722.4 971.0 715.3 970.5 716.1 970.0 716.5 969.5 718.9 969.0 723.0 968.5 714.5 968.0 714.2 967.5 715.2 967.0 718.5 966.5 715.0 966.0 719.1 965.5 714.9 965.0 715.1 964.5 715.3 964.0 716.4 963.5 720.3 963.0 715.6 962.5 720.3 962.0 718.4 961.5 723.4 961.0 730.5 960.5 714.5 960.0 714.8 959.5 714.8 959.0 715.0 958.5 716.3 958.0 718.6 957.5 715.3 957.0 715.2 956.5 715.3 956.0 716.2 955.5 717.5 955.0 715.9 954.5 715.8 954.0 716.8 953.5 718.4 953.0 720.3 952.5 725.0 952.0 714.4 951.5 715.3 951.0 717.6 950.5 714.9 950.0 714.2 949.5 714.6 949.0 714.6 948.5 714.3 948.0 714.2 947.5 715.2 947.0 715.0 946.5 715.3 946.0 719.7 945.5 716.8 945.0 717.3 944.5 722.1 944.0 715.3 943.5 715.4 943.0 714.8 942.5 715.0 942.0 715.5 941.5 717.1 941.0 716.6 940.5 719.3 940.0 715.8 939.5 717.9 939.0 718.8 938.5 715.1 938.0 716.4 937.5 719.6 937.0 714.6 936.5 715.0 936.0 715.6 935.5 716.6 935.0 717.0 934.5 720.7 934.0 715.8 933.5 716.4 933.0 718.3 932.5 721.5 932.0 727.7 931.5 714.3 931.0 714.5 930.5 714.6 930.0 716.7 929.5 721.1 929.0 716.8 928.5 719.3 928.0 721.6 927.5 726.9 927.0 733.9 926.5 720.9 926.0 714.3 925.5 714.8 925.0 714.5 924.5 715.7 924.0 717.7 923.5 722.6 923.0 714.9 922.5 715.0 922.0 714.3 921.5 714.2 921.0 714.3 920.5 714.2 920.0 713.9 919.5 714.7 919.0 714.0 918.5 713.9 918.0 714.2 917.5 714.9 917.0 717.2 916.5 722.0 916.0 715.5 915.5 716.8 915.0 718.2 914.5 720.8 914.0 715.2 913.5 718.0 913.0 723.1 912.5 716.9 912.0 719.9 911.5 714.6 911.0 716.9 910.5 719.5 910.0 715.8 909.5 715.7 909.0 716.8 908.5 717.0 908.0 718.6 907.5 721.2 907.0 725.1 906.5 730.5 906.0 740.2 905.5 713.8 905.0 714.1 904.5 715.5 904.0 715.4 903.5 716.4 903.0 720.1 902.5 718.3 902.0 715.1 901.5 714.4 901.0 714.5 900.5 715.8 900.0 717.0 899.5 720.4 899.0 727.2 898.5 714.0 898.0 714.9 897.5 715.2 897.0 714.1 896.5 714.6 896.0 717.1 895.5 727.2 895.0 723.3 894.5 714.3 894.0 715.4 893.5 716.7 893.0 715.5 892.5 716.2 892.0 714.7 891.5 716.6 891.0 714.8 890.5 717.9 890.0 718.3 889.5 715.9 889.0 716.1 888.5 714.6 888.0 714.6 887.5 716.3 887.0 716.8 886.5 721.5 886.0 715.6 885.5 720.3 885.0 715.7 884.5 716.6 884.0 715.1 883.5 715.7 883.0 715.3 882.5 716.8 882.0 718.5 881.5 720.3 881.0 723.0 880.5 728.5 880.0 738.1 879.5 717.4 879.0 721.8 878.5 717.8 878.0 725.1 877.5 716.1 877.0 717.5 876.5 719.1 876.0 723.6 875.5 717.9 875.0 720.0 874.5 722.1 874.0 727.2 873.5 732.9 873.0 714.7 872.5 717.4 872.0 716.5 871.5 718.3 871.0 720.4 870.5 724.7 870.0 731.2 869.5 715.5 869.0 715.6 868.5 718.2 868.0 717.6 867.5 718.8 867.0 721.5 866.5 725.6 866.0 731.0 865.5 740.7 865.0 714.9 864.5 715.6 864.0 718.1 863.5 718.3 863.0 715.2 862.5 715.4 862.0 716.4 861.5 720.3 861.0 715.4 860.5 715.8 860.0 718.3 859.5 722.9 859.0 717.6 858.5 718.6 858.0 721.8 857.5 727.0 857.0 734.5 856.5 715.4 856.0 717.6 855.5 717.1 855.0 718.2 854.5 719.7 854.0 723.5 853.5 715.5 853.0 716.9 852.5 722.5 852.0 723.3 851.5 715.1 851.0 717.9 850.5 717.7 850.0 722.8 849.5 715.1 849.0 717.2 848.5 714.7 848.0 715.0 847.5 716.5 847.0 715.5 846.5 715.6 846.0 717.1 845.5 718.3 845.0 721.1 844.5 725.3 844.0 732.0 843.5 718.6 843.0 715.5 842.5 713.9 842.0 714.7 841.5 714.4 841.0 714.9 840.5 715.2 840.0 716.2 839.5 719.1 839.0 715.4 838.5 716.2 838.0 721.3 837.5 714.8 837.0 715.4 836.5 714.9 836.0 716.2 835.5 720.9 835.0 714.3 834.5 716.5 834.0 714.1 833.5 713.6 833.0 713.9 832.5 714.3 832.0 716.8 831.5 714.0 831.0 715.6 830.5 717.2 830.0 720.0 829.5 727.3 829.0 714.7 828.5 715.0 828.0 714.6 827.5 715.6 827.0 716.2 826.5 719.9 826.0 715.6 825.5 718.4 825.0 715.3 824.5 715.7 824.0 718.9 823.5 719.6 823.0 724.8 822.5 714.9 822.0 717.6 821.5 722.5 821.0 715.3 820.5 716.3 820.0 720.3 819.5 715.4 819.0 716.3 818.5 714.5 818.0 715.7 817.5 714.2 817.0 714.7 816.5 714.5 816.0 714.5 815.5 714.7 815.0 716.2 814.5 723.2 814.0 720.6 813.5 727.9 813.0 716.9 812.5 721.1 812.0 715.3 811.5 716.2 811.0 716.0 810.5 718.4 810.0 721.2 809.5 726.3 809.0 735.3 808.5 714.6 808.0 715.9 807.5 716.5 807.0 717.6 806.5 718.8 806.0 722.8 805.5 729.3 805.0 714.8 804.5 714.0 804.0 714.3 803.5 715.1 803.0 714.9 802.5 714.8 802.0 715.4 801.5 716.4 801.0 717.2 800.5 716.1 800.0 717.9 799.5 715.4 799.0 715.9 798.5 717.7 798.0 721.2 797.5 714.8 797.0 715.0 796.5 715.1 796.0 714.6 795.5 716.7 795.0 718.7 794.5 723.7 794.0 716.6 793.5 717.9 793.0 720.4 792.5 723.0 792.0 727.0 791.5 734.3 791.0 745.4 790.5 716.7 790.0 715.5 789.5 716.7 789.0 720.8 788.5 714.8 788.0 717.1 787.5 723.9 787.0 719.6 786.5 715.1 786.0 714.4 785.5 715.6 785.0 716.8 784.5 724.4 784.0 716.7 783.5 714.7 783.0 715.2 782.5 717.0 782.0 723.8 781.5 716.2 781.0 716.3 780.5 718.6 780.0 714.7 779.5 716.1 779.0 717.8 778.5 718.9 778.0 717.6 777.5 715.2 777.0 716.2 776.5 716.1 776.0 715.7 775.5 716.2 775.0 717.6 774.5 718.6 774.0 722.0 773.5 725.4 773.0 732.3 772.5 716.3 772.0 717.8 771.5 719.2 771.0 721.2 770.5 725.2 770.0 731.1 769.5 717.0 769.0 719.3 768.5 715.5 768.0 716.0 767.5 715.2 767.0 715.3 766.5 715.0 766.0 715.8 765.5 718.3 765.0 714.9 764.5 714.5 764.0 716.0 763.5 717.2 763.0 715.0 762.5 715.7 762.0 717.3 761.5 715.7 761.0 719.3 760.5 717.4 760.0 720.4 759.5 725.2 759.0 714.5 758.5 714.2 758.0 714.5 757.5 714.2 757.0 714.1 756.5 715.1 756.0 714.0 755.5 714.4 755.0 716.6 754.5 718.6 754.0 724.4 753.5 717.0 753.0 719.4 752.5 728.5 752.0 714.4 751.5 714.2 751.0 715.0 750.5 714.5 750.0 716.2 749.5 714.4 749.0 716.8 748.5 718.8 748.0 717.1 747.5 721.3 747.0 722.8 746.5 714.6 746.0 715.5 745.5 715.9 745.0 718.7 744.5 720.5 744.0 724.1 743.5 730.8 743.0 715.5 742.5 718.3 742.0 718.2 741.5 722.5 741.0 731.6 740.5 715.3 740.0 716.7 739.5 718.4 739.0 722.6 738.5 715.5 738.0 718.6 737.5 728.4 737.0 717.3 736.5 720.5 736.0 728.2 735.5 715.3 735.0 716.3 734.5 720.6 734.0 720.4 733.5 714.2 733.0 715.6 732.5 718.2 732.0 714.9 731.5 715.0 731.0 716.4 730.5 717.4 730.0 719.1 729.5 722.4 729.0 727.6 728.5 735.1 728.0 747.3 727.5 714.3 727.0 715.8 726.5 716.8 726.0 716.2 725.5 714.2 725.0 715.0 724.5 716.4 724.0 719.4 723.5 728.0 723.0 715.8 722.5 721.4 722.0 714.2 721.5 716.3 721.0 715.5 720.5 717.1 720.0 720.8 719.5 717.2 719.0 718.6 718.5 721.9 718.0 727.2 717.5 715.2 717.0 716.1 716.5 716.6 716.0 719.1 715.5 723.9 715.0 732.5 714.5 716.9 714.0 725.0 713.5 714.1 713.0 714.6 712.5 716.1 712.0 718.8 711.5 714.9 711.0 716.3 710.5 721.5 710.0 714.6 709.5 714.8 709.0 714.5 708.5 715.3 708.0 716.6 707.5 717.4 707.0 721.0 706.5 725.8 706.0 715.4 705.5 716.2 705.0 714.7 704.5 713.8 704.0 714.1 703.5 714.2 703.0 714.3 702.5 714.5 702.0 714.3 701.5 714.8 701.0 715.6 700.5 717.7 700.0 724.3 699.5 717.0 699.0 714.9 698.5 714.6 698.0 714.2 697.5 715.4 697.0 715.2 696.5 717.0 696.0 719.4 695.5 727.0 695.0 717.3 694.5 720.0 694.0 723.9 693.5 714.6 693.0 714.7 692.5 714.8 692.0 713.8 691.5 713.9 691.0 714.0 690.5 714.7 690.0 715.1 689.5 719.2 689.0 714.4 688.5 715.5 688.0 716.7 687.5 718.4 687.0 715.8 686.5 719.7 686.0 716.4 685.5 715.1 685.0 717.9 684.5 723.5 684.0 721.3 683.5 721.2 683.0 716.3 682.5 718.8 682.0 723.9 681.5 716.1 681.0 714.9 680.5 715.9 680.0 714.8 679.5 714.7 679.0 714.9 678.5 716.4 678.0 718.3 677.5 722.0 677.0 715.6 676.5 716.5 676.0 721.3 675.5 715.0 675.0 715.4 674.5 715.2 674.0 715.0 673.5 714.7 673.0 716.4 672.5 721.2 672.0 714.6 671.5 715.0 671.0 714.2 670.5 715.3 670.0 717.3 669.5 717.3 669.0 714.5 668.5 714.8 668.0 714.8 667.5 714.2 667.0 714.6 666.5 716.0 666.0 715.0 665.5 715.6 665.0 715.3 664.5 716.4 664.0 716.2 663.5 716.9 663.0 721.6 662.5 722.0 662.0 725.9 661.5 731.8 661.0 714.9 660.5 714.5 660.0 714.8 659.5 717.7 659.0 714.9 658.5 714.8 658.0 715.1 657.5 715.5 657.0 716.1 656.5 717.9 656.0 715.5 655.5 715.6 655.0 717.9 654.5 714.8 654.0 716.6 653.5 714.7 653.0 714.8 652.5 715.0 652.0 714.9 651.5 714.7 651.0 715.4 650.5 715.1 650.0 714.9 649.5 715.3 649.0 718.9 648.5 728.2 648.0 718.0 647.5 725.9 647.0 715.0 646.5 715.2 646.0 715.7 645.5 714.9 645.0 715.4 644.5 717.2 644.0 717.8 643.5 723.6 643.0 715.5 642.5 717.3 642.0 723.8 641.5 715.6 641.0 715.5 640.5 716.9 640.0 717.4 639.5 719.7 639.0 723.5 638.5 728.3 638.0 714.5 637.5 714.1 637.0 715.2 636.5 715.1 636.0 717.7 635.5 715.6 635.0 716.8 634.5 723.9 634.0 713.8 633.5 714.0 633.0 715.5 632.5 717.3 632.0 715.4 631.5 716.3 631.0 715.8 630.5 718.7 630.0 724.2 629.5 715.8 629.0 716.9 628.5 719.7 628.0 725.1 627.5 732.9 627.0 717.4 626.5 721.2 626.0 716.6 625.5 717.7 625.0 722.4 624.5 717.1 624.0 718.7 623.5 723.1 623.0 731.8 622.5 748.7 622.0 714.9 621.5 716.9 621.0 719.1 620.5 717.7 620.0 721.7 619.5 714.3 619.0 714.3 618.5 714.3 618.0 715.0 617.5 715.9 617.0 715.3 616.5 715.9 616.0 716.4 615.5 718.7 615.0 714.6 614.5 714.6 614.0 714.8 613.5 715.3 613.0 716.0 612.5 716.9 612.0 718.4 611.5 722.7 611.0 715.9 610.5 714.9 610.0 715.6 609.5 716.3 609.0 719.0 608.5 724.5 608.0 726.8 607.5 716.3 607.0 720.1 606.5 727.6 606.0 714.3 605.5 714.6 605.0 717.5 604.5 714.9 604.0 715.7 603.5 714.7 603.0 716.1 602.5 719.2 602.0 722.6 601.5 731.6 601.0 718.6 600.5 715.0 600.0 715.1 599.5 717.0 599.0 720.4 598.5 714.1 598.0 715.0 597.5 715.6 597.0 715.4 596.5 716.8 596.0 720.3 595.5 716.0 595.0 715.0 594.5 715.1 594.0 717.0 593.5 716.6 593.0 719.1 592.5 726.7 592.0 716.3 591.5 722.1 591.0 717.0 590.5 719.6 590.0 725.0 589.5 716.8 589.0 719.7 588.5 722.7 588.0 716.2 587.5 718.0 587.0 721.3 586.5 728.4 586.0 715.7 585.5 717.7 585.0 715.3 584.5 716.7 584.0 715.4 583.5 714.9 583.0 716.0 582.5 715.6 582.0 715.7 581.5 717.9 581.0 722.6 580.5 719.9 580.0 724.6 579.5 716.0 579.0 716.5 578.5 715.1 578.0 715.5 577.5 715.4 577.0 716.6 576.5 718.1 576.0 720.3 575.5 720.6 575.0 724.6 574.5 730.0 574.0 737.7 573.5 715.5 573.0 715.9 572.5 715.3 572.0 714.6 571.5 715.4 571.0 714.8 570.5 716.4 570.0 717.1 569.5 719.9 569.0 719.7 568.5 718.6 568.0 724.8 567.5 715.3 567.0 715.4 566.5 716.7 566.0 718.3 565.5 716.7 565.0 718.5 564.5 725.9 564.0 714.5 563.5 716.3 563.0 714.8 562.5 714.3 562.0 715.0 561.5 716.5 561.0 714.7 560.5 714.8 560.0 716.0 559.5 716.9 559.0 716.5 558.5 720.0 558.0 719.8 557.5 724.7 557.0 713.9 556.5 714.2 556.0 714.9 555.5 716.9 555.0 719.7 554.5 717.5 554.0 720.4 553.5 718.1 553.0 721.4 552.5 714.6 552.0 714.3 551.5 716.3 551.0 715.0 550.5 714.4 550.0 715.4 549.5 717.4 549.0 722.6 548.5 715.9 548.0 716.5 547.5 718.7 547.0 715.0 546.5 714.3 546.0 715.3 545.5 716.0 545.0 719.8 544.5 722.0 544.0 714.4 543.5 716.2 543.0 714.2 542.5 714.5 542.0 714.6 541.5 715.5 541.0 715.9 540.5 716.9 540.0 721.0 539.5 718.0 539.0 723.4 538.5 715.1 538.0 716.2 537.5 715.1 537.0 715.8 536.5 716.9 536.0 719.8 535.5 715.1 535.0 716.2 534.5 718.4 534.0 714.3 533.5 714.7 533.0 716.8 532.5 720.8 532.0 714.4 531.5 714.6 531.0 716.7 530.5 714.8 530.0 714.9 529.5 715.0 529.0 715.1 528.5 715.6 528.0 717.6 527.5 719.0 527.0 722.8 526.5 716.5 526.0 723.5 525.5 715.1 525.0 715.5 524.5 717.0 524.0 715.1 523.5 714.5 523.0 715.3 522.5 715.8 522.0 716.3 521.5 716.7 521.0 717.2 520.5 719.1 520.0 722.0 519.5 718.2 519.0 723.1 518.5 715.5 518.0 717.9 517.5 724.5 517.0 716.2 516.5 715.0 516.0 715.0 515.5 718.5 515.0 722.4 514.5 714.5 514.0 715.1 513.5 714.6 513.0 716.4 512.5 721.0 512.0 713.8 511.5 714.8 511.0 715.0 510.5 714.9 510.0 718.6 509.5 715.9 509.0 716.6 508.5 719.8 508.0 718.9 507.5 721.8 507.0 725.4 506.5 731.0 506.0 739.5 505.5 715.4 505.0 717.0 504.5 719.7 504.0 726.9 503.5 716.8 503.0 718.4 502.5 721.6 502.0 725.8 501.5 732.9 501.0 715.7 500.5 718.5 500.0 716.5 499.5 716.7 499.0 718.4 498.5 722.4 498.0 726.6 497.5 734.1 497.0 714.7 496.5 715.8 496.0 715.2 495.5 716.1 495.0 718.9 494.5 723.4 494.0 716.1 493.5 717.6 493.0 722.3 492.5 715.9 492.0 716.7 491.5 717.1 491.0 718.7 490.5 720.5 490.0 723.4 489.5 728.6 489.0 736.7 488.5 717.5 488.0 725.2 487.5 716.1 487.0 717.9 486.5 720.5 486.0 727.8 485.5 723.3 485.0 727.9 484.5 717.2 484.0 719.3 483.5 716.8 483.0 719.9 482.5 728.8 482.0 721.9 481.5 728.6 481.0 716.6 480.5 722.8 480.0 716.5 479.5 719.1 479.0 716.3 478.5 718.5 478.0 715.8 477.5 720.7 477.0 715.9 476.5 718.4 476.0 714.7 475.5 715.6 475.0 717.0 474.5 717.5 474.0 718.9 473.5 721.8 473.0 715.3 472.5 718.4 472.0 728.2 471.5 722.3 471.0 714.6 470.5 716.8 470.0 716.3 469.5 720.9 469.0 714.4 468.5 715.5 468.0 718.0 467.5 714.3 467.0 714.6 466.5 715.0 466.0 715.2 465.5 715.5 465.0 717.4 464.5 721.5 464.0 714.3 463.5 714.1 463.0 714.5 462.5 714.7 462.0 716.7 461.5 717.1 461.0 724.5 460.5 716.9 460.0 714.3 459.5 714.8 459.0 714.2 458.5 714.6 458.0 715.9 457.5 714.9 457.0 715.0 456.5 714.9 456.0 714.5 455.5 714.0 455.0 715.1 454.5 715.4 454.0 716.0 453.5 715.0 453.0 717.0 452.5 714.4 452.0 715.5 451.5 716.4 451.0 717.6 450.5 719.4 450.0 714.5 449.5 716.8 449.0 721.5 448.5 714.4 448.0 714.8 447.5 715.7 447.0 718.0 446.5 715.4 446.0 716.9 445.5 714.9 445.0 715.0 444.5 715.9 444.0 716.5 443.5 718.4 443.0 723.7 442.5 721.9 442.0 716.7 441.5 714.4 441.0 716.5 440.5 722.4 440.0 714.6 439.5 715.6 439.0 718.5 438.5 714.9 438.0 715.3 437.5 717.2 437.0 718.3 436.5 723.7 436.0 716.0 435.5 719.9 435.0 715.6 434.5 717.1 434.0 718.4 433.5 714.5 433.0 715.7 432.5 714.6 432.0 715.4 431.5 716.0 431.0 716.1 430.5 719.1 430.0 723.9 429.5 715.0 429.0 715.7 428.5 716.6 428.0 720.0 427.5 714.6 427.0 715.1 426.5 717.2 426.0 719.3 425.5 723.1 425.0 731.4 424.5 718.8 424.0 714.4 423.5 714.8 423.0 716.7 422.5 723.4 422.0 714.3 421.5 714.6 421.0 716.0 420.5 719.4 420.0 728.7 419.5 716.4 419.0 717.3 418.5 721.0 418.0 715.1 417.5 715.3 417.0 718.1 416.5 723.6 416.0 716.5 415.5 713.8 415.0 714.7 414.5 715.6 414.0 718.7 413.5 714.8 413.0 714.8 412.5 714.7 412.0 716.0 411.5 717.1 411.0 718.4 410.5 722.0 410.0 714.6 409.5 716.6 409.0 714.2 408.5 714.2 408.0 715.1 407.5 715.6 407.0 715.0 406.5 714.9 406.0 716.4 405.5 718.1 405.0 721.1 404.5 726.6 404.0 736.2 403.5 721.6 403.0 714.7 402.5 714.0 402.0 714.4 401.5 715.7 401.0 715.4 400.5 716.6 400.0 720.9 399.5 714.4 399.0 714.6 398.5 714.6 398.0 714.5 397.5 714.5 397.0 714.5 396.5 714.1 396.0 715.8 395.5 714.1 395.0 714.3 394.5 714.5 394.0 715.2 393.5 713.8 393.0 714.7 392.5 715.0 392.0 715.6 391.5 716.7 391.0 714.6 390.5 715.2 390.0 717.3 389.5 719.2 389.0 718.9 388.5 721.6 388.0 727.2 387.5 715.0 387.0 714.5 386.5 714.4 386.0 715.7 385.5 716.1 385.0 717.2 384.5 719.7 384.0 721.9 383.5 726.3 383.0 734.2 382.5 714.6 382.0 714.1 381.5 715.2 381.0 714.5 380.5 715.4 380.0 714.8 379.5 716.6 379.0 724.8 378.5 714.5 378.0 715.6 377.5 717.7 377.0 716.1 376.5 718.8 376.0 714.6 375.5 716.9 375.0 725.0 374.5 717.5 374.0 721.0 373.5 716.1 373.0 716.0 372.5 718.1 372.0 722.3 371.5 729.0 371.0 715.3 370.5 716.2 370.0 714.1 369.5 714.5 369.0 714.7 368.5 716.8 368.0 721.3 367.5 716.8 367.0 719.2 366.5 717.0 366.0 724.3 365.5 714.8 365.0 716.2 364.5 720.5 364.0 717.3 363.5 715.0 363.0 715.7 362.5 718.3 362.0 715.4 361.5 715.8 361.0 720.1 360.5 714.8 360.0 716.8 359.5 722.7 359.0 716.4 358.5 718.9 358.0 723.5 357.5 722.5 357.0 729.3 356.5 717.1 356.0 714.4 355.5 715.0 355.0 716.8 354.5 721.7 354.0 714.8 353.5 715.3 353.0 715.0 352.5 716.0 352.0 714.9 351.5 716.7 351.0 719.4 350.5 716.2 350.0 717.5 349.5 720.0 349.0 718.0 348.5 721.8 348.0 714.2 347.5 714.4 347.0 714.5 346.5 714.3 346.0 714.4 345.5 714.3 345.0 716.0 344.5 717.0 344.0 714.4 343.5 715.2 343.0 714.8 342.5 715.7 342.0 716.6 341.5 715.1 341.0 714.8 340.5 715.0 340.0 714.9 339.5 716.2 339.0 717.8 338.5 720.6 338.0 726.1 337.5 736.3 337.0 719.6 336.5 714.2 336.0 714.8 335.5 714.1 335.0 715.8 334.5 716.3 334.0 715.1 333.5 714.4 333.0 716.0 332.5 717.2 332.0 720.4 331.5 728.6 331.0 728.6 330.5 716.2 330.0 718.0 329.5 718.5 329.0 722.4 328.5 724.6 328.0 731.6 327.5 721.1 327.0 723.6 326.5 715.0 326.0 715.0 325.5 715.0 325.0 715.7 324.5 720.8 324.0 716.9 323.5 721.5 323.0 718.4 322.5 714.8 322.0 716.0 321.5 716.7 321.0 719.2 320.5 715.4 320.0 719.6 319.5 714.3 319.0 716.0 318.5 715.2 318.0 716.6 317.5 719.7 317.0 714.9 316.5 715.2 316.0 714.8 315.5 715.8 315.0 715.7 314.5 715.5 314.0 716.6 313.5 714.6 313.0 715.8 312.5 717.3 312.0 720.5 311.5 726.8 311.0 714.8 310.5 715.8 310.0 716.1 309.5 718.1 309.0 724.1 308.5 716.6 308.0 715.4 307.5 715.8 307.0 717.2 306.5 722.9 306.0 716.6 305.5 716.6 305.0 718.0 304.5 720.6 304.0 723.5 303.5 728.6 303.0 715.6 302.5 716.6 302.0 719.0 301.5 724.4 301.0 714.1 300.5 715.0 300.0 714.5 299.5 714.7 299.0 715.2 298.5 715.2 298.0 715.1 297.5 716.0 297.0 718.9 296.5 718.2 296.0 724.5 295.5 718.7 295.0 721.9 294.5 725.6 294.0 731.9 293.5 714.5 293.0 714.4 292.5 716.1 292.0 719.9 291.5 718.9 291.0 724.5 290.5 732.7 290.0 723.8 289.5 717.0 289.0 715.7 288.5 720.1 288.0 716.5 287.5 714.3 287.0 715.1 286.5 716.0 286.0 719.3 285.5 715.4 285.0 717.2 284.5 721.8 284.0 715.2 283.5 715.2 283.0 714.9 282.5 715.4 282.0 717.0 281.5 717.8 281.0 720.0 280.5 723.2 280.0 728.1 279.5 737.3 279.0 714.4 278.5 715.6 278.0 716.6 277.5 722.2 277.0 715.7 276.5 716.7 276.0 720.2 275.5 717.3 275.0 720.2 274.5 715.9 274.0 717.5 273.5 723.4 273.0 714.9 272.5 716.3 272.0 715.8 271.5 715.8 271.0 717.9 270.5 715.9 270.0 718.2 269.5 720.1 269.0 726.9 268.5 715.3 268.0 716.1 267.5 719.8 267.0 717.9 266.5 723.2 266.0 714.8 265.5 714.2 265.0 714.9 264.5 715.1 264.0 716.1 263.5 719.3 263.0 714.7 262.5 716.6 262.0 715.7 261.5 716.2 261.0 720.1 260.5 714.0 260.0 714.5 259.5 714.9 259.0 716.4 258.5 722.2 258.0 715.9 257.5 714.5 257.0 714.1 256.5 714.6 256.0 714.5 255.5 714.9 255.0 714.9 254.5 714.6 254.0 716.9 253.5 720.8 253.0 715.9 252.5 719.7 252.0 714.7 251.5 716.1 251.0 714.8 250.5 713.9 250.0 714.3 249.5 714.6 249.0 715.1 248.5 716.2 248.0 717.3 247.5 721.1 247.0 728.6 246.5 716.6 246.0 724.8 245.5 717.6 245.0 724.7 244.5 716.1 244.0 718.7 243.5 716.1 243.0 716.8 242.5 719.3 242.0 721.8 241.5 718.0 241.0 717.0 240.5 718.6 240.0 719.8 239.5 722.7 239.0 716.1 238.5 716.7 238.0 718.4 237.5 719.9 237.0 723.0 236.5 714.5 236.0 714.6 235.5 714.4 235.0 714.9 234.5 716.2 234.0 718.4 233.5 715.2 233.0 716.8 232.5 718.0 232.0 720.6 231.5 719.3 231.0 724.2 230.5 734.2 230.0 715.2 229.5 717.1 229.0 717.9 228.5 720.2 228.0 724.9 227.5 732.1 227.0 716.8 226.5 718.8 226.0 721.3 225.5 716.0 225.0 717.2 224.5 721.9 224.0 714.6 223.5 715.1 223.0 715.3 222.5 716.8 222.0 718.3 221.5 723.5 221.0 714.8 220.5 716.1 220.0 717.4 219.5 714.9 219.0 714.3 218.5 715.1 218.0 716.2 217.5 716.6 217.0 717.9 216.5 721.1 216.0 725.8 215.5 717.0 215.0 715.0 214.5 714.5 214.0 715.0 213.5 714.7 213.0 715.6 212.5 716.4 212.0 716.1 211.5 714.9 211.0 717.5 210.5 718.8 210.0 718.2 209.5 719.5 209.0 722.3 208.5 727.0 208.0 734.3 207.5 715.8 207.0 716.6 206.5 715.3 206.0 715.7 205.5 717.3 205.0 719.1 204.5 716.0 204.0 717.5 203.5 720.9 203.0 716.1 202.5 718.3 202.0 715.3 201.5 714.7 201.0 716.4 200.5 719.1 200.0 714.9 199.5 715.9 199.0 716.6 198.5 718.6 198.0 721.0 197.5 724.9 197.0 733.0 196.5 714.3 196.0 714.7 195.5 716.3 195.0 723.5 194.5 715.9 194.0 718.6 193.5 721.6 193.0 729.3 192.5 717.8 192.0 726.0 191.5 719.6 191.0 715.1 190.5 716.4 190.0 717.9 189.5 722.1 189.0 723.6 188.5 732.2 188.0 716.0 187.5 718.6 187.0 722.7 186.5 715.1 186.0 714.8 185.5 716.5 185.0 718.1 184.5 722.6 184.0 714.7 183.5 713.6 183.0 714.3 182.5 714.1 182.0 713.8 181.5 714.4 181.0 715.2 180.5 715.2 180.0 717.1 179.5 714.8 179.0 715.8 178.5 714.7 178.0 714.5 177.5 715.7 177.0 716.5 176.5 719.2 176.0 716.2 175.5 717.2 175.0 715.0 174.5 715.0 174.0 714.2 173.5 715.6 173.0 716.4 172.5 720.2 172.0 719.3 171.5 715.2 171.0 717.1 170.5 714.8 170.0 714.9 169.5 714.8 169.0 714.5 168.5 717.2 168.0 714.9 167.5 714.9 167.0 716.1 166.5 719.1 166.0 714.1 165.5 714.1Z" fill="#000" stroke="#000" stroke-width="0.6" stroke-linejoin="round"/>
<path d="M188.5 711V744.9M193.0 711V738.4M197.0 711V745.4M208.0 711V748.1M216.0 711V733.0M227.5 711V743.4M230.5 711V747.4M237.0 711V728.4M239.5 711V726.4M242.0 711V724.4M279.5 711V753.7M290.5 711V746.4M294.0 711V743.4M303.5 711V738.4M301.5 711V729.4M328.0 711V743.4M331.0 711V738.4M337.5 711V750.8M357.0 711V738.4M371.5 711V739.1M383.0 711V748.1M388.0 711V735.4M404.0 711V753.4M410.5 711V726.4M425.0 711V744.2M430.0 711V729.1M442.5 711V721.4M443.0 711V721.1M450.5 711V722.4M473.5 711V726.4M481.5 711V737.0M485.0 711V736.4M489.0 711V752.9M497.5 711V748.9M501.5 711V746.4M506.0 711V757.7M520.0 711V726.4M527.0 711V728.4M557.5 711V731.2M574.0 711V755.0M580.0 711V730.4M588.5 711V727.4M601.5 711V745.4M611.5 711V727.4M622.5 711V775.6M627.5 711V746.4M638.5 711V737.8M647.5 711V723.4M661.5 711V744.4M683.5 711V724.4M694.0 711V729.1M706.5 711V732.3M715.0 711V745.0M718.0 711V736.4M728.0 711V773.0M739.0 711V728.4M741.0 711V745.0M743.5 711V743.4M759.5 711V733.1M770.0 711V741.8M773.0 711V743.4M791.0 711V767.4M805.5 711V739.4M809.0 711V749.2M844.0 711V745.7M854.0 711V728.4M857.0 711V748.4M865.5 711V760.8M870.0 711V742.4M873.5 711V747.4M876.0 711V728.4M880.0 711V755.0M906.0 711V758.7M914.5 711V724.4M927.0 711V748.9M932.0 711V736.4M952.5 711V730.4M961.0 711V741.0M969.0 711V728.4M978.5 711V741.8M986.5 711V753.7M996.5 711V735.7M1009.5 711V738.4M1033.5 711V751.6M1039.0 711V722.4" fill="none" stroke="#000" stroke-width="1.5" stroke-linecap="round"/>
<path d="M162 708.5L166.4 708.5L166.0 722L165.2 770L164.3 853L162 853Z" fill="#000" stroke="none"/>
<path d="M164.6 709.5L166.8 709.5L166.3 600L166.0 426.5L165.0 426.5L164.9 600Z" fill="#1a1a1a" stroke="none"/>
</svg>
<span class="t " style="left:140.6px;top:461.7px;font-size:23.6px;line-height:30px;color:#262626;">3</span>
<span class="t " style="left:140.6px;top:540.4px;font-size:23.6px;line-height:30px;color:#262626;">2</span>
<span class="t " style="left:140.6px;top:619.1px;font-size:23.6px;line-height:30px;color:#262626;">1</span>
<span class="t " style="left:140.6px;top:697.8px;font-size:23.6px;line-height:30px;color:#262626;">0</span>
<span class="t " style="left:132.6px;top:776.5px;font-size:23.6px;line-height:30px;color:#262626;">-1</span>
<span class="t " style="left:156.0px;top:874.0px;font-size:23.6px;line-height:30px;color:#262626;">0</span>
<span class="t " style="left:295.9px;top:874.0px;font-size:23.6px;line-height:30px;color:#262626;">10</span>
<span class="t " style="left:442.3px;top:874.0px;font-size:23.6px;line-height:30px;color:#262626;">20</span>
<span class="t " style="left:588.7px;top:874.0px;font-size:23.6px;line-height:30px;color:#262626;">30</span>
<span class="t " style="left:735.1px;top:874.0px;font-size:23.6px;line-height:30px;color:#262626;">40</span>
<span class="t " style="left:881.5px;top:874.0px;font-size:23.6px;line-height:30px;color:#262626;">50</span>
<span class="t " style="left:554.7px;top:907.0px;font-size:26px;line-height:32px;color:#262626;letter-spacing:-0.09px;">Time (s)</span>
<span class="t " style="left:166.3px;top:395.5px;font-size:23.6px;line-height:30px;color:#262626;letter-spacing:-0.27px;">×10</span>
<span class="t " style="left:207.0px;top:394.4px;font-size:15.6px;line-height:20px;color:#262626;letter-spacing:-0.42px;">-10</span>
<span class="t" style="left:0;top:0;font-size:26px;line-height:30px;color:#262626;transform-origin:0 0;transform:translate(95.8px,709px) rotate(-90deg);letter-spacing:-0.09px;">Current (A)</span>
</body></html>
